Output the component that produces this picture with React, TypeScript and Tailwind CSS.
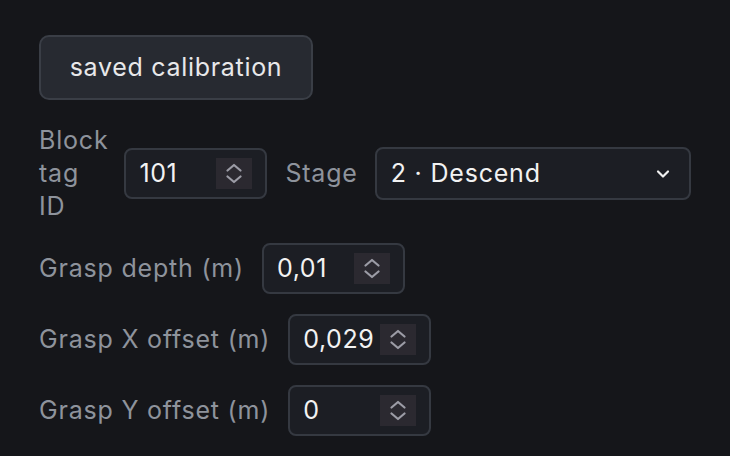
import { ChevronDown } from "lucide-react";

function Spinner() {
  return (
    <div className="flex h-[31px] w-[36px] flex-col items-center justify-center gap-[3px] bg-[#2b2930]">
      <svg width="16" height="9" viewBox="0 0 16 9" fill="none">
        <path d="M1.5 7.5 L8 2 L14.5 7.5" stroke="#9c9ca6" strokeWidth="2.2" strokeLinecap="round" strokeLinejoin="round" />
      </svg>
      <svg width="16" height="9" viewBox="0 0 16 9" fill="none">
        <path d="M1.5 1.5 L8 7 L14.5 1.5" stroke="#9c9ca6" strokeWidth="2.2" strokeLinecap="round" strokeLinejoin="round" />
      </svg>
    </div>
  );
}

function NumberInput({ value }: { value: string }) {
  return (
    <div className="flex h-[51px] w-[143px] shrink-0 items-center justify-between rounded-[8px] border-2 border-[#353941] bg-[#1c1e24] pl-[13px] pr-[13px]">
      <span className="text-[25px] leading-none tracking-[0.6px] text-[#f2f2f2]">{value}</span>
      <Spinner />
    </div>
  );
}

export default function App() {
  return (
    <div
      className="h-[456px] w-[730px] overflow-hidden bg-[#15161a] px-[39px] pt-[35px] text-[25px] tracking-[0.8px] text-[#8e939c]"
      style={{ fontFamily: "Inter, 'Noto Sans', sans-serif" }}
    >
      <button className="h-[65px] w-[274px] rounded-[10px] border-2 border-[#3a3e46] bg-[#272a31] text-[25px] tracking-[0.7px] text-[#e8e8ea]">
        saved calibration
      </button>

      <div className="mt-[24px] flex flex-col gap-[20px]">
        <div className="flex items-center">
          <div className="w-min leading-[33px]">Block tag ID</div>
          <div className="ml-[16px]">
            <NumberInput value="101" />
          </div>
          <span className="ml-[18px]">Stage</span>
          <div className="ml-[17px] flex h-[53px] w-[316px] items-center justify-between rounded-[8px] border-2 border-[#353941] bg-[#1c1e24] pl-[14px] pr-[16px]">
            <span className="text-[#f2f2f2]">2 · Descend</span>
            <ChevronDown size={20} strokeWidth={2.6} color="#f0f0f0" />
          </div>
        </div>

        <div className="flex items-center gap-[18px]">
          <span>Grasp depth (m)</span>
          <NumberInput value="0,01" />
        </div>
        <div className="flex items-center gap-[18px]">
          <span>Grasp X offset (m)</span>
          <NumberInput value="0,029" />
        </div>
        <div className="flex items-center gap-[18px]">
          <span>Grasp Y offset (m)</span>
          <NumberInput value="0" />
        </div>
      </div>
    </div>
  );
}
